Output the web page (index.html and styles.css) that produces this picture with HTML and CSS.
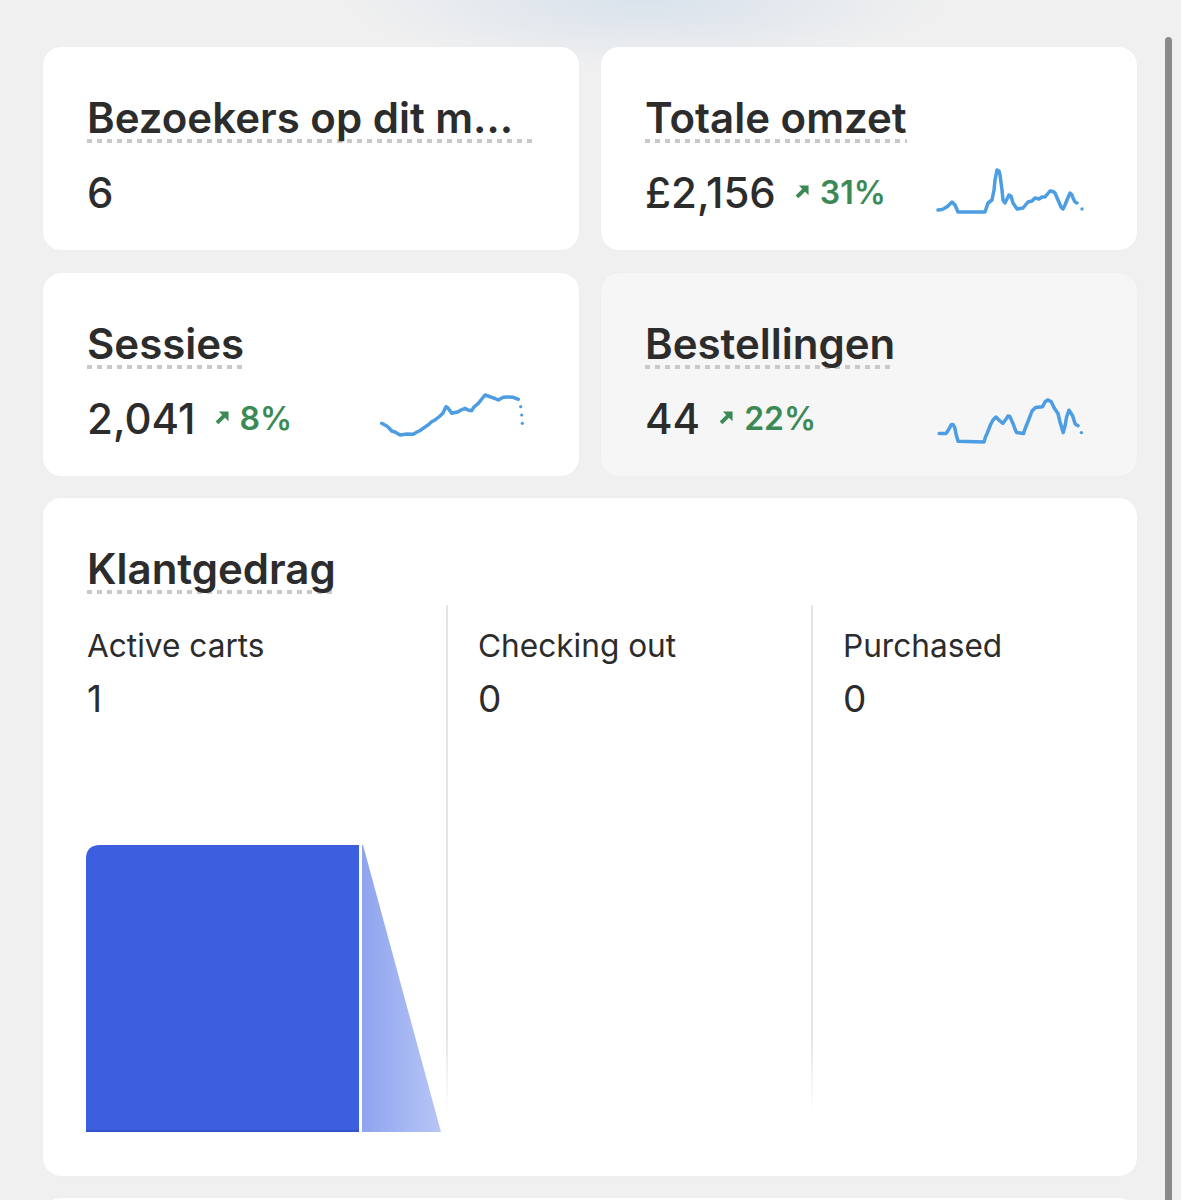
FILE: index.html
```html
<!DOCTYPE html>
<html lang="nl">
<head>
<meta charset="utf-8">
<title>Dashboard</title>
<link rel="stylesheet" href="styles.css">
</head>
<body>
<div class="page">
  <div class="stats">
    <div class="card">
      <div class="card-title"><span class="title title-full">Bezoekers op dit moment</span></div>
      <div class="metric-row">
        <span class="value">6</span>
      </div>
    </div>
    <div class="card">
      <div class="card-title"><span class="title">Totale omzet</span></div>
      <div class="metric-row">
        <span class="value">£2,156</span>
        <span class="delta"><svg class="arrow" viewBox="0 0 14 14"><path d="M2.5 11.5 L8.5 5.5" /><polygon points="4,2 12,2 12,10" /></svg>31%</span>
        <svg class="spark" viewBox="0 3 158 60">
          <polyline points="3,50 7,49.5 10,48 13,46 17,42 20,45 23,52 50,52 53,43 57,40 59,30 60,20 62,10 64,11 65,15 67,30 68,40 70,43 74,35 76,36 78,43 82,49 88,48 93,42 97,41 100,38 104,39 107,37 110,37 115,31 118,31.5 120,33 123,40 126,47 128,49 130,45 132,40 135,33 137,35 138,38 140,42 142,43" />
          <circle cx="147" cy="49" r="1.7" />
        </svg>
      </div>
    </div>
    <div class="card">
      <div class="card-title"><span class="title">Sessies</span></div>
      <div class="metric-row">
        <span class="value">2,041</span>
        <span class="delta"><svg class="arrow" viewBox="0 0 14 14"><path d="M2.5 11.5 L8.5 5.5" /><polygon points="4,2 12,2 12,10" /></svg>8%</span>
        <svg class="spark" viewBox="0 3 158 60">
          <polyline points="4.7,37.3 9.7,40 12,42 14.7,45 18,46 23,49 30,48 36.3,48.3 40,46 43,44.7 48,41 51,39 54.7,35.7 58,34 63,30 66,27 69,20.7 71,22 74.7,27.3 78,26.5 81.3,25.7 84,24 88,22.3 91,24 94.7,24.7 97,21 101.3,17.3 104,14 108,9 111,10 114.7,11.3 118,12.5 121.3,14 126.3,11.3 131,11 136.3,11.3 141.3,13.3" />
          <circle cx="143.7" cy="20.7" r="1.6" />
          <circle cx="144.7" cy="29" r="1.6" />
          <circle cx="145.3" cy="37.3" r="1.6" />
        </svg>
      </div>
    </div>
    <div class="card card-muted">
      <div class="card-title"><span class="title">Bestellingen</span></div>
      <div class="metric-row">
        <span class="value">44</span>
        <span class="delta"><svg class="arrow" viewBox="0 0 14 14"><path d="M2.5 11.5 L8.5 5.5" /><polygon points="4,2 12,2 12,10" /></svg>22%</span>
        <svg class="spark" viewBox="0 3 158 60">
          <polyline points="4.2,47.6 11,47.6 14,43 16.2,38.7 18,38.5 19.7,41.4 21,48 23.1,55.2 49,55.9 50.5,51 52.4,46.6 55.8,38 58,34 61,31 64.4,34.5 67.9,37.3 71.3,32.8 73,30 74.8,30.4 78.2,38 80,43 81.6,46.6 88.5,47.6 90,43 92,38 95.4,29.4 97,25 100.6,21.4 107.5,20.8 110,16 112.7,13.9 116.1,15.6 119.5,22.5 123,27.6 125,36 128.2,46.6 130,40 131.6,31 134,24.2 137.5,29.4 140.2,38 143,39.7" />
          <circle cx="146.4" cy="46.6" r="1.7" />
        </svg>
      </div>
    </div>
  </div>

  <div class="card card-wide">
    <div class="card-title"><span class="title">Klantgedrag</span></div>
    <div class="funnel">
      <div class="stage stage-first">
        <div class="stage-label">Active carts</div>
        <div class="stage-value">1</div>
        <svg class="funnel-chart" viewBox="0 0 359 288" width="359" height="288">
          <defs>
            <linearGradient id="fade" x1="0" x2="1" y1="0" y2="0">
              <stop offset="0" stop-color="#8fa4ee" />
              <stop offset="1" stop-color="#b7c5f6" />
            </linearGradient>
          </defs>
          <path class="bar" d="M0 287 V14 Q0 0 14 0 H273 V287 Z" />
          <rect class="bar-base" x="0" y="285" width="273" height="2" />
          <polygon fill="url(#fade)" points="276,0 277,0 355,287 276,287" />
        </svg>
      </div>
      <div class="stage stage-line">
        <div class="stage-label">Checking out</div>
        <div class="stage-value">0</div>
      </div>
      <div class="stage stage-line">
        <div class="stage-label">Purchased</div>
        <div class="stage-value">0</div>
      </div>
    </div>
  </div>

  <div class="card card-next"></div>
</div>
<div class="scrollbar"></div>
</body>
</html>
```

FILE: styles.css
```css
html, body {
  margin: 0;
  padding: 0;
  overflow: hidden;
}

body {
  font-family: "Inter", "Noto Sans", "Liberation Sans", sans-serif;
  color: #2c2c2c;
  background:
    radial-gradient(ellipse 300px 70px at 645px 0px, rgba(217, 226, 236, 1), rgba(240, 240, 240, 0) 100%),
    #f0f0f0;
  height: 1200px;
}

.page {
  padding: 47px 44px 0 43px;
  width: 1094px;
}

.stats {
  display: grid;
  grid-template-columns: minmax(0, 1fr) minmax(0, 1fr);
  column-gap: 22px;
  row-gap: 23px;
}

.card {
  background: #ffffff;
  border-radius: 18px;
  box-shadow: 0 0 1px rgba(0, 0, 0, 0.06);
  padding: 0 44px;
  height: 203px;
  box-sizing: border-box;
  display: flex;
  flex-direction: column;
  align-items: flex-start;
  min-width: 0;
}

.card-muted {
  background: #f6f6f6;
}

.card-title {
  margin-top: 46px;
  max-width: 100%;
  display: flex;
}

.title {
  display: inline-block;
  max-width: 100%;
  font-size: 42px;
  font-weight: 600;
  line-height: 50px;
  white-space: nowrap;
  overflow: hidden;
  text-overflow: ellipsis;
  background-image: linear-gradient(to right, #c9c9c9 0 5px, transparent 5px 10px);
  background-size: 10px 4px;
  background-repeat: repeat-x;
  background-position: left bottom 0;
}

.title-full {
  width: 450px;
}

.metric-row {
  margin-top: 20px;
  height: 60px;
  width: 100%;
  display: flex;
  align-items: center;
}

.value {
  font-size: 42px;
  font-weight: 500;
  line-height: 50px;
}

.delta {
  display: flex;
  align-items: center;
  margin-left: 18px;
  color: #3b8a55;
  font-size: 32px;
  font-weight: 600;
  line-height: 38px;
}

.arrow {
  width: 17px;
  height: 17px;
  margin-right: 9px;
  margin-top: -3px;
}

.arrow path {
  stroke: #3b8a55;
  stroke-width: 3.2;
  fill: none;
}

.arrow polygon {
  fill: #3b8a55;
}

.spark {
  margin-left: auto;
  width: 158px;
  height: 60px;
  flex: none;
}

.spark polyline {
  fill: none;
  stroke: #4c9de2;
  stroke-width: 3.5;
  stroke-linejoin: round;
  stroke-linecap: round;
}

.spark circle {
  fill: #4c9de2;
}

.card-wide {
  margin-top: 22px;
  height: 678px;
  align-items: stretch;
}

.card-wide .card-title {
  align-self: flex-start;
}

.funnel {
  margin-top: 11px;
  height: 528px;
  display: grid;
  grid-template-columns: 359px 365px 1fr;
}

.stage {
  display: flex;
  flex-direction: column;
  padding-top: 22px;
  box-sizing: border-box;
}

.stage-line {
  border-left: 2px solid #e4e4e4;
  border-image: linear-gradient(to bottom, #e4e4e4 0%, #e6e6e6 82%, rgba(230, 230, 230, 0) 96%) 1;
  padding-left: 30px;
}

.stage-label {
  font-size: 31.6px;
  line-height: 38px;
  font-weight: 400;
}

.stage-value {
  margin-top: 12px;
  font-size: 37px;
  line-height: 44px;
  font-weight: 400;
}

.funnel-chart {
  margin-top: auto;
  margin-left: -1px;
  display: block;
}

.bar {
  fill: #3b5fdf;
}

.bar-base {
  fill: #3553c8;
}

.card-next {
  margin-top: 22px;
  height: 200px;
}

.scrollbar {
  position: fixed;
  top: 37px;
  bottom: 0;
  right: 9px;
  width: 7px;
  background: #8a8a8a;
  border-radius: 4px 4px 0 0;
}
```
